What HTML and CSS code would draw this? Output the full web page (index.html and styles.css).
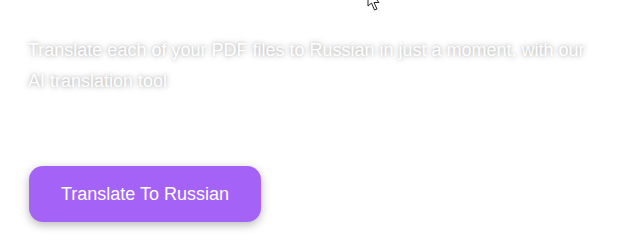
FILE: index.html
```html
<!DOCTYPE html>
<html>
<head>
<meta charset="utf-8">
<link rel="stylesheet" href="styles.css">
</head>
<body>
<div class="hero">
  <p class="lead">Translate each of your PDF files to Russian in just a moment, with our AI translation tool</p>
  <button class="cta">Translate To Russian</button>
</div>
<svg class="cursor" width="15" height="12" viewBox="0 0 15 12"><path d="M1 -11 L1 6 L4.5 3 L7.5 10 L10 9 L7 2.5 L12 2.5 Z" fill="#fff" stroke="#222" stroke-width="1"/></svg>
</body>
</html>
```
FILE: styles.css
```css
html, body { margin: 0; background: #fff; }
body { font-family: "Liberation Sans", Arial, sans-serif; position: relative; width: 635px; height: 245px; overflow: hidden; }
.hero { padding: 35px 28px 0 28px; display: flex; flex-direction: column; align-items: flex-start; }
.lead { margin: 0; width: 572px; font-size: 18px; line-height: 31px; color: #fff; text-shadow: 0 0 6px rgba(0,0,0,0.3), 0 0 3px rgba(0,0,0,0.15); }
.cta { margin-top: 69px; margin-left: 1px; width: 232px; height: 56px; border: none; border-radius: 14px; background: #a463f6; color: #fff; font-family: inherit; font-size: 18px; box-shadow: 0 3px 10px rgba(0,0,0,0.28); }
.cursor { position: absolute; left: 367px; top: 0; }
```
